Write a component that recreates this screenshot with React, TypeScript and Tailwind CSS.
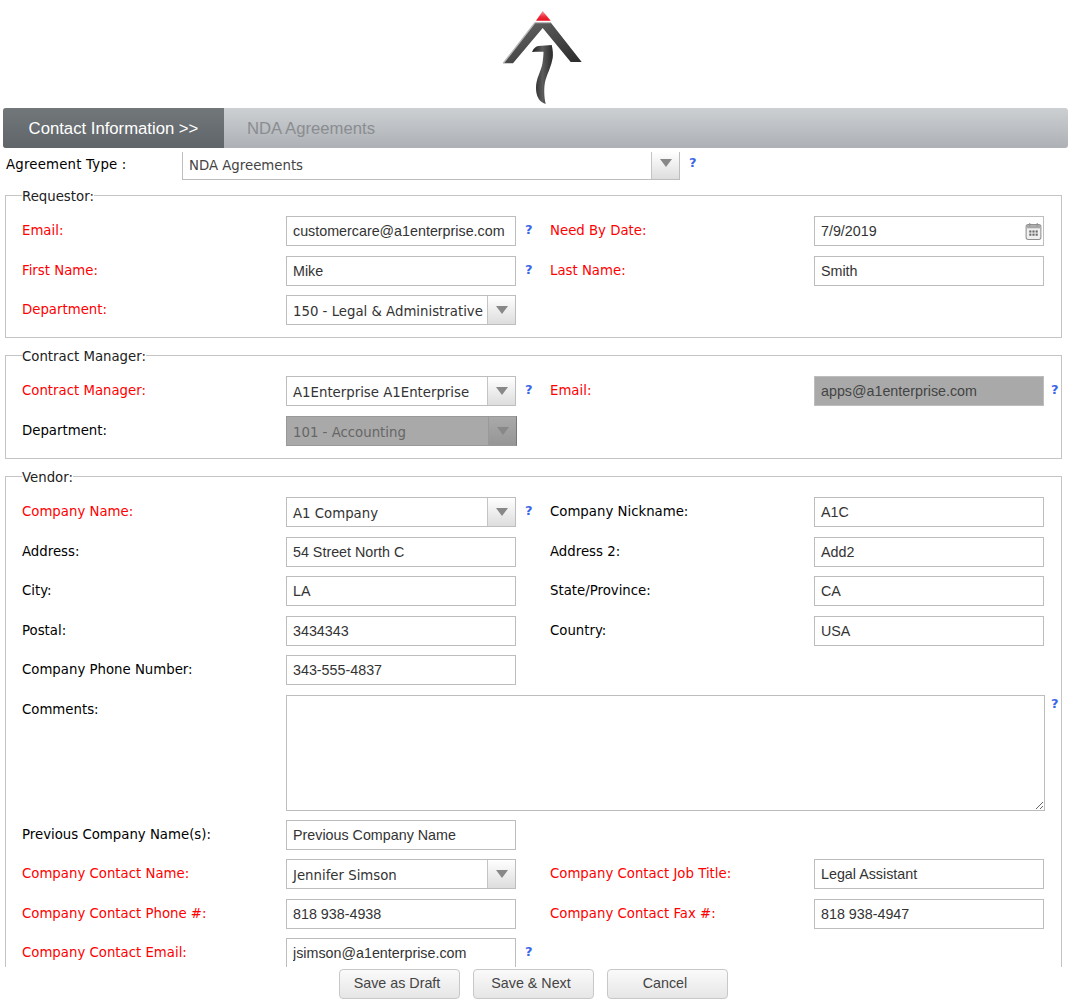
const labelFont = "font-['DejaVu_Sans',Verdana,sans-serif] text-[13.3px]";
const inputFont = "font-['Liberation_Sans',Arial,sans-serif] text-[14.3px]";

function Logo() {
  return (
    <svg width="84" height="98" viewBox="0 0 84 98" className="block">
      <defs>
        <linearGradient id="redTop" x1="0" y1="0" x2="0" y2="1">
          <stop offset="0" stopColor="#f2a0a8" />
          <stop offset="0.6" stopColor="#ee2a3a" />
          <stop offset="1" stopColor="#e8101f" />
        </linearGradient>
        <linearGradient id="roof" x1="0" y1="0" x2="1" y2="1">
          <stop offset="0" stopColor="#6a6a6a" />
          <stop offset="0.5" stopColor="#4a4a4a" />
          <stop offset="1" stopColor="#2a2a2a" />
        </linearGradient>
        <linearGradient id="stem" x1="0" y1="0" x2="1" y2="0">
          <stop offset="0" stopColor="#1c1c1c" />
          <stop offset="0.5" stopColor="#5c5c5c" />
          <stop offset="1" stopColor="#2a2a2a" />
        </linearGradient>
      </defs>
      <path d="M42.7 5 L50.7 14.7 L36 14.7 Z" fill="url(#redTop)" />
      <path d="M35 16.6 L50.7 16.6 L81.7 56 L70.7 56 L42.7 22 L13 57.3 L3.3 57.3 Z" fill="url(#roof)" />
      <path d="M35 16.6 L50.7 16.6 M35 16.6 L3.3 57.3" stroke="#b8b8b8" strokeWidth="1.4" fill="none" />
      <path
        d="M32 46 C33.5 42 36 40.5 38.3 40 L51.7 39 C53 44 53.2 49 52.7 52 C51.5 60 47.5 67 45.5 74 C43.8 80 43.8 90 45.7 98 C39 96 36 90 36 82 C36 72 41 66 42.5 57 C43.2 52 43.5 48 43.5 45.7 L38.3 45.7 C36 45.7 34 45.7 32 46 Z"
        fill="url(#stem)"
      />
    </svg>
  );
}

function Help({ className = "" }: { className?: string }) {
  return (
    <span className={`font-['DejaVu_Sans',Verdana,sans-serif] text-[13px] leading-[15px] font-bold text-[#3b66e6] ${className}`}>
      ?
    </span>
  );
}

function Label({ text, required }: { text: string; required?: boolean }) {
  return (
    <span className={`${labelFont} leading-[16px] pt-[7px] ${required ? "text-[#ff0000]" : "text-black"}`}>
      {text}
    </span>
  );
}

function TextBox({ value, disabled }: { value: string; disabled?: boolean }) {
  return (
    <input
      readOnly
      defaultValue={value}
      className={`${inputFont} w-[230px] h-[30px] px-[6px] border outline-none border-[#bdbdbd] ${
        disabled ? "bg-[#a9a9a9] text-[#444]" : "bg-white text-[#333]"
      }`}
    />
  );
}

function Arrow() {
  return <span className="w-0 h-0 border-x-[6px] border-t-[8px] border-x-transparent border-t-[#888888]" />;
}

function Combo({ value, disabled }: { value: string; disabled?: boolean }) {
  return (
    <div
      className={`flex h-[30px] border ${
        disabled ? "w-[231px] bg-[#a9a9a9] border-[#999] border-r-[#777]" : "w-[230px] bg-white border-[#bdbdbd]"
      }`}
    >
      <span className={`${labelFont} flex-1 pl-[6px] leading-[32px] whitespace-nowrap ${disabled ? "text-[#666]" : "text-[#333]"}`}>
        {value}
      </span>
      <span
        className={`w-[28px] flex justify-center pt-[10px] border-l ${
          disabled ? "bg-gradient-to-b from-[#a9a9a9] to-[#969696] border-[#999]" : "bg-gradient-to-b from-white to-[#dddddd] border-[#c4c4c4]"
        }`}
      >
        <Arrow />
      </span>
    </div>
  );
}

type Cell = { label: string; value?: string; required?: boolean; combo?: boolean; disabled?: boolean; help?: boolean; date?: boolean };

function Row({ left, right }: { left: Cell; right?: Cell }) {
  return (
    <div className="grid grid-cols-[264px_230px_34px_264px_230px_1fr] h-[39.5px] items-start">
      <Label text={left.label} required={left.required} />
      {left.combo ? <Combo value={left.value ?? ""} disabled={left.disabled} /> : <TextBox value={left.value ?? ""} disabled={left.disabled} />}
      <span className="pl-[9px]">{left.help && <Help />}</span>
      {right ? <Label text={right.label} required={right.required} /> : <span />}
      {right ? (
        <div className="relative">
          <TextBox value={right.value ?? ""} disabled={right.disabled} />
          {right.date && <CalendarIcon />}
        </div>
      ) : (
        <span />
      )}
      <span className="pl-[7px]">{right?.help && <Help />}</span>
    </div>
  );
}

function CalendarIcon() {
  return (
    <svg width="17" height="19" viewBox="0 0 16 18" className="absolute right-[2px] top-[6px]">
      <rect x="1" y="2.5" width="14" height="14" rx="2" fill="#f0f0f0" stroke="#8f8f8f" />
      <rect x="1.5" y="3" width="13" height="3" fill="#a8a8a8" />
      <path d="M4.5 1v3M11.5 1v3" stroke="#8f8f8f" />
      <g fill="#6a6a6a">
        <rect x="4" y="8" width="2" height="2" />
        <rect x="7" y="8" width="2" height="2" />
        <rect x="10" y="8" width="2" height="2" />
        <rect x="4" y="11" width="2" height="2" />
        <rect x="7" y="11" width="2" height="2" />
        <rect x="10" y="11" width="2" height="2" />
      </g>
    </svg>
  );
}

function Group({ title, className = "", children }: { title: string; className?: string; children: React.ReactNode }) {
  return (
    <fieldset className={`ml-[5px] w-[1057px] border border-[#c4c4c4] pl-[16px] pt-[11px] ${className}`}>
      <legend className={`${labelFont} leading-[16px] pt-[4px] text-[#222]`}>{title}</legend>
      {children}
    </fieldset>
  );
}

function ActionButton({ text }: { text: string }) {
  return (
    <button className="w-[121px] h-[30px] pr-[5px] rounded-[4px] border border-[#c8c8c8] bg-gradient-to-b from-[#fafafa] to-[#e6e6e6] font-['Liberation_Sans',Arial,sans-serif] text-[14.3px] text-[#444]">
      {text}
    </button>
  );
}

export default function App() {
  return (
    <div className="w-[1077px] h-[1008px] bg-white flex flex-col overflow-hidden">
      <div className="h-[108px] shrink-0 pl-[500px] pt-[6px]">
        <Logo />
      </div>

      {/* Wizard tabs */}
      <div className="ml-[3px] w-[1065px] h-[40px] shrink-0 flex rounded-[3px] overflow-hidden bg-gradient-to-b from-[#ccd0d3] to-[#adb0b4] font-['Liberation_Sans',Arial,sans-serif] text-[16.7px]">
        <div className="w-[221px] pt-[1px] flex items-center justify-center bg-gradient-to-b from-[#72777a] to-[#60656a] text-white">
          Contact Information &gt;&gt;
        </div>
        <div className="pl-[23px] pt-[1px] flex items-center text-[#8a8d90]">NDA Agreements</div>
      </div>

      {/* Agreement type */}
      <div className="h-[37px] shrink-0 flex items-start pt-[4px]">
        <span className={`${labelFont} text-black w-[182px] pl-[6px] pt-[5px] leading-[16px] tracking-[0.2px]`}>Agreement Type :</span>
        <div className="flex w-[498px] h-[28px] border border-t-0 border-[#bdbdbd]">
          <span className={`${labelFont} text-[#444] flex-1 pl-[6px] leading-[27px]`}>NDA Agreements</span>
          <span className="w-[28px] flex justify-center pt-[7px] border-l border-[#c4c4c4] bg-gradient-to-b from-white to-[#dddddd]">
            <Arrow />
          </span>
        </div>
        <Help className="ml-[9px] mt-[3px]" />
      </div>

      <div className="flex-1 min-h-0 overflow-hidden">
        <Group title="Requestor:" className="h-[153px]">
          <Row
            left={{ label: "Email:", value: "customercare@a1enterprise.com", required: true, help: true }}
            right={{ label: "Need By Date:", value: "7/9/2019", required: true, date: true }}
          />
          <Row
            left={{ label: "First Name:", value: "Mike", required: true, help: true }}
            right={{ label: "Last Name:", value: "Smith", required: true }}
          />
          <Row left={{ label: "Department:", value: "150 - Legal & Administrative", required: true, combo: true }} />
        </Group>

        <Group title="Contract Manager:" className="h-[114px] mt-[7px]">
          <Row
            left={{ label: "Contract Manager:", value: "A1Enterprise A1Enterprise", required: true, combo: true, help: true }}
            right={{ label: "Email:", value: "apps@a1enterprise.com", required: true, disabled: true, help: true }}
          />
          <Row left={{ label: "Department:", value: "101 - Accounting", combo: true, disabled: true }} />
        </Group>

        <Group title="Vendor:" className="mt-[7px] pb-[20px]">
          <Row
            left={{ label: "Company Name:", value: "A1 Company", required: true, combo: true, help: true }}
            right={{ label: "Company Nickname:", value: "A1C" }}
          />
          <Row left={{ label: "Address:", value: "54 Street North C" }} right={{ label: "Address 2:", value: "Add2" }} />
          <Row left={{ label: "City:", value: "LA" }} right={{ label: "State/Province:", value: "CA" }} />
          <Row left={{ label: "Postal:", value: "3434343" }} right={{ label: "Country:", value: "USA" }} />
          <Row left={{ label: "Company Phone Number:", value: "343-555-4837" }} />

          <div className="flex h-[125px] items-start">
            <span className="w-[264px] flex">
              <Label text="Comments:" />
            </span>
            <textarea readOnly className="w-[759px] h-[116px] border border-[#bdbdbd] outline-none bg-white" />
            <Help className="ml-[6px] mt-[1px]" />
          </div>

          <Row left={{ label: "Previous Company Name(s):", value: "Previous Company Name" }} />
          <Row
            left={{ label: "Company Contact Name:", value: "Jennifer Simson", required: true, combo: true }}
            right={{ label: "Company Contact Job Title:", value: "Legal Assistant", required: true }}
          />
          <Row
            left={{ label: "Company Contact Phone #:", value: "818 938-4938", required: true }}
            right={{ label: "Company Contact Fax #:", value: "818 938-4947", required: true }}
          />
          <Row left={{ label: "Company Contact Email:", value: "jsimson@a1enterprise.com", required: true, help: true }} />
        </Group>
      </div>

      {/* Footer actions */}
      <div className="h-[41px] shrink-0 pt-[2px] pl-[339px] flex items-start gap-[13px]">
        <ActionButton text="Save as Draft" />
        <ActionButton text="Save & Next" />
        <ActionButton text="Cancel" />
      </div>
    </div>
  );
}
